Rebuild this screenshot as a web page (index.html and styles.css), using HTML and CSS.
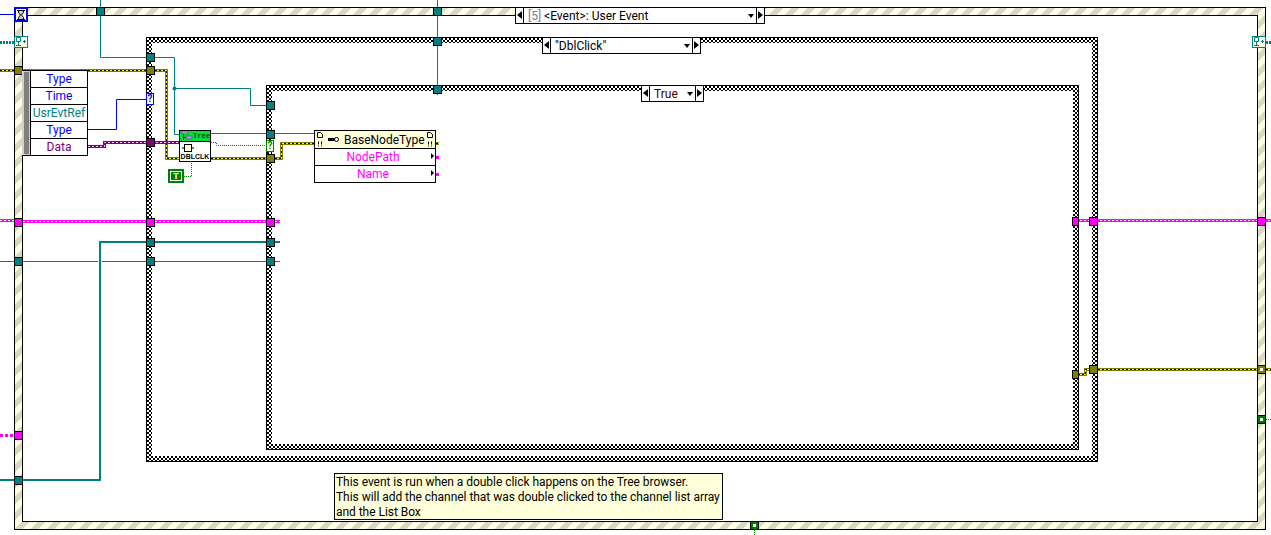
FILE: index.html
```html
<!DOCTYPE html>
<html lang="en">
<head>
<meta charset="utf-8">
<title>Block diagram</title>
<link rel="stylesheet" href="styles.css">
</head>
<body>
<main class="diagram">
  <section class="frame event-frame"><div class="frame-inner"></div></section>
  <section class="frame stack-frame"><div class="frame-inner"></div></section>
  <section class="frame case-frame"><div class="frame-inner"></div></section>

  <svg class="wires" width="1271" height="535" viewBox="0 0 1271 535" xmlns="http://www.w3.org/2000/svg">
    <defs>
      <path id="y1" d="M0 70.500H146"/>
      <path id="y2" d="M155 70.500H166.500V158.500H267"/>
      <path id="y3" d="M275 158.500H281.500V143.500H314"/>
      <path id="y4" d="M436 143.500H439"/>
      <path id="y5" d="M1078 374.500H1085.500V369.500H1090"/>
      <path id="y6" d="M1098 369.500H1271"/>
      <path id="p1" d="M0 220.500H14"/>
      <path id="p2" d="M23 221.500H280"/>
      <path id="p3" d="M1072 220.500H1271"/>
      <path id="d1" d="M88 146.500H104.500V142.500H180"/>
    </defs>
    <!-- plain wires -->
    <g class="w-blue">
      <path d="M0 14.500H14"/>
      <path d="M88 129.500H116.500V99.500H146"/>
    </g>
    <g class="w-teal">
      <path d="M100.500 0V57.500H146"/>
      <path d="M155 57.500H174.500V134.500H180"/>
      <path d="M174.500 88.500H250.500V105.500H267"/>
      <path d="M210 133.500H314"/>
      <path d="M0 261.500H98M102 261.500H280"/>
      <path d="M437.500 0V95"/>
    </g>
    <circle class="junction" cx="174.500" cy="88.500" r="2"/>
    <path class="w-teal-thick" d="M0 480H100V242H280"/>
    <g class="w-teal-double">
      <path d="M0 42.500H14"/>
      <path d="M1266 42.500H1271"/>
    </g>
    <g class="w-dots">
      <path d="M211 142.500H216.500V145.500H266"/>
      <path d="M184 176.500H191.500V163"/>
      <path d="M1266 419.500H1271"/>
      <path d="M754.500 530V535"/>
    </g>

    <!-- cluster wires -->
    <g class="c-yellow">
      <use href="#y1"/><use href="#y2"/><use href="#y3"/><use href="#y4"/><use href="#y5"/><use href="#y6"/>
    </g>
    <g class="c-yellow-core">
      <use href="#y1"/><use href="#y2"/><use href="#y3"/><use href="#y4"/><use href="#y5"/><use href="#y6"/>
    </g>
    <g class="c-yellow-dash">
      <use href="#y1"/><use href="#y2"/><use href="#y3"/><use href="#y4"/><use href="#y5"/><use href="#y6"/>
    </g>
    <g class="c-pink">
      <use href="#p1"/><use href="#p2"/><use href="#p3"/>
      <path d="M436 157.500H439"/>
      <path d="M436 174.500H439"/>
    </g>
    <g class="c-pink-dash">
      <use href="#p1"/><use href="#p2"/><use href="#p3"/>
    </g>
    <path class="c-pink-thin" d="M0 435.500H14"/>
    <g class="c-purple"><use href="#d1"/></g>
    <g class="c-purple-dash"><use href="#d1"/></g>

    <!-- tunnels -->
    <g class="t-teal">
      <rect x="96.500" y="7.500" width="8" height="8"/>
      <rect x="433.500" y="7.500" width="8" height="8"/>
      <rect x="433.500" y="37.500" width="8" height="8"/>
      <rect x="433.500" y="85.500" width="8" height="8"/>
      <rect x="146.500" y="53.500" width="8" height="8"/>
      <rect x="266.500" y="101.500" width="8" height="8"/>
      <rect x="266.500" y="130.500" width="8" height="8"/>
      <rect x="14.500" y="257.500" width="8" height="8"/>
      <rect x="146.500" y="257.500" width="8" height="8"/>
      <rect x="266.500" y="257.500" width="8" height="8"/>
      <rect x="146.500" y="238.500" width="8" height="8"/>
      <rect x="266.500" y="238.500" width="8" height="8"/>
      <rect x="14.500" y="476.500" width="8" height="8"/>
    </g>
    <g class="t-olive">
      <rect x="14.500" y="66.500" width="8" height="8"/>
      <rect x="146.500" y="66.500" width="8" height="8"/>
      <rect x="266.500" y="154.500" width="8" height="8"/>
      <rect x="1072.500" y="370.500" width="6" height="8"/>
      <rect x="1089.500" y="365.500" width="8" height="8"/>
      <rect x="1257.500" y="365.500" width="8" height="8"/>
    </g>
    <g class="t-pink">
      <rect x="14.500" y="218.500" width="8" height="8"/>
      <rect x="146.500" y="218.500" width="8" height="8"/>
      <rect x="266.500" y="218.500" width="8" height="8"/>
      <rect x="1072.500" y="217.500" width="6" height="8"/>
      <rect x="1089.500" y="217.500" width="8" height="8"/>
      <rect x="1257.500" y="217.500" width="8" height="8"/>
      <rect x="14.500" y="431.500" width="8" height="8"/>
    </g>
    <rect class="t-purple" x="146.500" y="138.500" width="8" height="8"/>
    <g class="t-green">
      <rect x="1257.500" y="415.500" width="8" height="8"/>
      <rect x="750.500" y="521.500" width="8" height="8"/>
    </g>
    <g class="t-dot">
      <rect x="1260" y="368" width="3" height="3"/>
      <rect x="1260" y="418" width="3" height="3"/>
      <rect x="753" y="524" width="3" height="3"/>
    </g>
  </svg>

  <!-- event structure terminals -->
  <div class="hourglass" aria-label="Timeout">
    <svg width="10" height="10" viewBox="0 0 10 10" xmlns="http://www.w3.org/2000/svg">
      <path class="glass-fill" d="M2 .5H8V2L5.500 5L8 8V9.500H2V8L4.500 5L2 2Z"/>
      <path class="glass-line" d="M1 .5H9M1 9.500H9M2.500 1V2.500L4.500 5L2.500 7.500V9M7.500 1V2.500L5.500 5L7.500 7.500V9"/>
    </svg>
  </div>
  <div class="reg-node reg-left">
    <svg width="12" height="10" viewBox="0 0 12 10" xmlns="http://www.w3.org/2000/svg">
      <path class="reg-line" d="M1.500 .5H5.500V4.500H1.500ZM3.500 4.500V8.500M1 8.500H6M8 4.500H11M9.500 3V6"/>
    </svg>
  </div>
  <div class="reg-node reg-right">
    <svg width="12" height="10" viewBox="0 0 12 10" xmlns="http://www.w3.org/2000/svg">
      <path class="reg-line" d="M1.500 .5H5.500V4.500H1.500ZM3.500 4.500V8.500M1 8.500H6M8 4.500H11M9.500 3V6"/>
    </svg>
  </div>

  <!-- question tunnels -->
  <div class="qbox qbox-blue">?</div>
  <div class="qbox qbox-green">?</div>

  <!-- case selectors -->
  <div class="selector sel-event">
    <span class="sel-arrow sel-prev"></span>
    <span class="sel-label"><span class="sel-index">[5]</span> &lt;Event&gt;: User Event</span>
    <span class="sel-drop"></span>
    <span class="sel-arrow sel-next"></span>
  </div>
  <div class="selector sel-stack">
    <span class="sel-arrow sel-prev"></span>
    <span class="sel-label">"DblClick"</span>
    <span class="sel-drop"></span>
    <span class="sel-arrow sel-next"></span>
  </div>
  <div class="selector sel-case">
    <span class="sel-arrow sel-prev"></span>
    <span class="sel-label">True</span>
    <span class="sel-drop"></span>
    <span class="sel-arrow sel-next"></span>
  </div>

  <!-- unbundle -->
  <div class="unbundle">
    <div class="handle"><span class="handle-bar"></span></div>
    <ul class="rows">
      <li class="row c-blue">Type</li>
      <li class="row c-blue">Time</li>
      <li class="row c-tealtext">UsrEvtRef</li>
      <li class="row c-blue">Type</li>
      <li class="row c-purpletext">Data</li>
    </ul>
  </div>

  <!-- tree node -->
  <div class="tree-node">
    <div class="tree-head">
      <svg class="tree-icon" width="13" height="10" viewBox="0 0 13 10" xmlns="http://www.w3.org/2000/svg">
        <path class="tree-branch" d="M3.500 3V9M3.500 6.500H6"/>
        <rect class="tree-item" x="2" y="0" width="6" height="3"/>
        <rect class="tree-item" x="6" y="5" width="6" height="3"/>
      </svg>
      <span class="tree-title">Tree</span>
    </div>
    <div class="tree-mid">
      <svg width="14" height="8" viewBox="0 0 14 8" xmlns="http://www.w3.org/2000/svg">
        <path class="tree-stub" d="M1 4H4M11 4H13"/>
        <rect class="tree-box" x="3.500" y=".5" width="7" height="7"/>
      </svg>
    </div>
    <div class="tree-foot">DBLCLK</div>
  </div>

  <!-- true constant -->
  <div class="bool-const"><span class="bool-t">T</span></div>

  <!-- bundle by name -->
  <div class="bundle">
    <div class="bundle-head">
      <svg class="doc" width="6" height="15" viewBox="0 0 6 15" xmlns="http://www.w3.org/2000/svg">
        <path class="doc-line" d="M.5 .5H3.500L5.500 2.500V5.500H.5ZM1.500 9.500V12.500M1.500 13.500V14.500M4.500 9.500V12.500M4.500 13.500V14.500"/>
      </svg>
      <svg class="key" width="11" height="7" viewBox="0 0 11 7" xmlns="http://www.w3.org/2000/svg">
        <path class="key-bar" d="M0 2H7V5H0Z"/>
        <circle class="key-ring" cx="8.500" cy="3.500" r="2"/>
      </svg>
      <span class="bundle-title">BaseNodeType</span>
      <svg class="doc" width="6" height="15" viewBox="0 0 6 15" xmlns="http://www.w3.org/2000/svg">
        <path class="doc-line" d="M.5 .5H3.500L5.500 2.500V5.500H.5ZM1.500 9.500V12.500M1.500 13.500V14.500M4.500 9.500V12.500M4.500 13.500V14.500"/>
      </svg>
    </div>
    <div class="bundle-row">NodePath<span class="row-arrow"></span></div>
    <div class="bundle-row">Name<span class="row-arrow"></span></div>
  </div>

  <!-- comment -->
  <p class="comment">This event is run when a double click happens on the Tree browser.<br>This will add the channel that was double clicked to the channel list array<br>and the List Box</p>
</main>
</body>
</html>
```
FILE: styles.css
```css
* { box-sizing: border-box; }
html, body { margin: 0; padding: 0; background: #fff; }
.diagram {
  position: relative;
  width: 1271px;
  height: 535px;
  overflow: hidden;
  background: #fff;
  font-family: Roboto, "Noto Sans", sans-serif;
  font-size: 12px;
  color: #000;
}

/* structure frames */
.frame { position: absolute; border: 1px solid #000; }
.frame-inner { width: 100%; height: 100%; background: #fff; }

.event-frame {
  left: 14px; top: 7px; width: 1252px; height: 523px;
  padding: 7px;
  background: repeating-linear-gradient(135deg, #ffffe6 0 5.66px, #d9d9c3 5.66px 11.32px);
}
.event-frame .frame-inner { border: 1px solid #000; }

.stack-frame {
  left: 146px; top: 37px; width: 952px; height: 425px;
  padding: 5px;
  background: conic-gradient(#000 25%, #fff 0 50%, #000 0 75%, #fff 0) 0 0 / 4px 4px;
}
.case-frame {
  left: 266px; top: 85px; width: 813px; height: 365px;
  padding: 5px;
  background: conic-gradient(#000 25%, #fff 0 50%, #000 0 75%, #fff 0) 0 0 / 4px 4px;
}

/* wires */
.wires { position: absolute; left: 0; top: 0; }
.wires path, .wires use { fill: none; }
.w-blue { stroke: #0000ff; stroke-width: 1; }
.w-teal { stroke: #008080; stroke-width: 1; }
.junction { fill: #008080; }
.w-teal-thick { stroke: #008080; stroke-width: 2; }
.w-teal-double { stroke: #008080; stroke-width: 3; stroke-dasharray: 2 1; }
.w-dots { stroke: #008000; stroke-width: 1; stroke-dasharray: 1 1; }
.c-yellow { stroke: #808000; stroke-width: 3; }
.c-yellow-core { stroke: #ffff00; stroke-width: 1; }
.c-yellow-dash { stroke: #000; stroke-width: 1; stroke-dasharray: 2 2; }
.c-pink { stroke: #ff00ff; stroke-width: 3; }
.c-pink-dash { stroke: #fff; stroke-width: 1; stroke-dasharray: 2 2; }
.c-pink-thin { stroke: #ff00ff; stroke-width: 3; stroke-dasharray: 3 2; }
.c-purple { stroke: #800080; stroke-width: 3; }
.c-purple-dash { stroke: #ffc8ff; stroke-width: 1; stroke-dasharray: 2 2; }

/* tunnels */
.wires rect { stroke: #000; stroke-width: 1; }
.t-teal rect { fill: #008080; }
.t-olive rect { fill: #808000; }
.t-pink rect { fill: #ff00ff; }
.t-purple { fill: #800080; }
.t-green rect { fill: #007c00; }
.wires .t-dot rect { fill: #fff; stroke: none; }

/* event terminals */
.hourglass {
  position: absolute; left: 14px; top: 7px; width: 14px; height: 15px;
  border: 2px solid #0000ff;
  background: #ffffe6;
  display: flex; align-items: center; justify-content: center;
}
.hourglass svg { flex: none; }
.glass-fill { fill: #c8c8b4; }
.glass-line { fill: none; stroke: #000; stroke-width: 1; }

.reg-node {
  position: absolute; top: 36px; width: 14px; height: 12px;
  border: 1px solid #008080;
  background: #ffffe6;
  display: flex; align-items: center; justify-content: center;
}
.reg-left { left: 14px; }
.reg-right { left: 1252px; }
.reg-line { fill: none; stroke: #008080; stroke-width: 1; }

/* question tunnels */
.qbox {
  position: absolute; width: 8px; height: 12px;
  display: flex; align-items: center; justify-content: center;
  background: #ffffe6;
  font-size: 10px; font-weight: 700; line-height: 1;
}
.qbox-blue { left: 146px; top: 93px; border: 1px solid #0000ff; color: #0000ff; }
.qbox-green { left: 266px; top: 140px; border: 1px solid #008000; color: #008000; }

/* selectors */
.selector {
  position: absolute;
  display: flex; align-items: center;
  background: #fff;
  border: 1px solid #000;
  height: 17px;
  font-size: 12px; line-height: 15px;
}
.sel-event { left: 515px; top: 7px; width: 250px; }
.sel-stack { left: 542px; top: 37px; width: 159px; }
.sel-case { left: 641px; top: 85px; width: 63px; color: #400000; }
.sel-arrow {
  flex: none; width: 8px; height: 15px;
  position: relative;
}
.sel-prev { border-right: 1px solid #000; }
.sel-next { border-left: 1px solid #000; }
.sel-prev::after, .sel-next::after {
  content: ""; position: absolute; top: 3px;
  border-top: 4px solid transparent; border-bottom: 4px solid transparent;
}
.sel-prev::after { left: 1px; border-right: 5px solid #000; }
.sel-next::after { left: 1px; border-left: 5px solid #000; }
.sel-label { flex: 1; padding: 1px 0 0 4px; height: 15px; white-space: nowrap; overflow: hidden; }
.sel-index { color: #7a7a9a; }
.sel-drop {
  flex: none; width: 0; height: 0; margin-right: 2px;
  border-left: 3.5px solid transparent; border-right: 3.5px solid transparent;
  border-top: 4px solid #000;
}

/* unbundle */
.unbundle {
  position: absolute; left: 22px; top: 70px; width: 66px; height: 86px;
  display: flex;
  background: #fff;
  border: 1px solid #000;
  border-left: none;
}
.handle {
  flex: none; width: 9px; background: #d4d0c8;
  display: flex; justify-content: center; align-items: stretch;
  border-right: 1px solid #000;
}
.handle-bar { display: block; flex: none; width: 5px; background: #7f7f7f; margin: 1px 0; }
.rows { flex: 1; min-width: 0; margin: 0; padding: 0; list-style: none; display: flex; flex-direction: column; }
.row {
  flex: 1; display: flex; align-items: center; justify-content: center;
  font-size: 12px; line-height: 1;
  padding-bottom: 1px;
  border-bottom: 1px solid #000;
}
.row:last-child { border-bottom: none; }
.c-blue { color: #0000ff; }
.c-tealtext { color: #008080; }
.c-purpletext { color: #800080; }

/* tree node */
.tree-node {
  position: absolute; left: 179px; top: 130px; width: 32px; height: 32px;
  border: 1px solid #000;
  background: #fff;
  display: flex; flex-direction: column;
}
.tree-head {
  height: 11px; background: #00e040;
  border-bottom: 1px solid #000;
  display: flex; align-items: center;
  flex: none;
}
.tree-icon { flex: none; }
.tree-title { font-family: "Liberation Mono", monospace; font-size: 7px; font-weight: 700; line-height: 1; color: #004000; letter-spacing: .1px; }
.tree-branch { fill: none; stroke: #004000; stroke-width: 1; }
.tree-item { fill: #a0a0d0; stroke: #404040; stroke-width: .5; }
.tree-mid { flex: 1; display: flex; align-items: center; padding-left: 1px; }
.tree-stub { fill: none; stroke: #000; stroke-width: 1; }
.tree-box { fill: #ffffc8; stroke: #000; stroke-width: 1; }
.tree-foot { font-family: "Liberation Sans", sans-serif; font-size: 7px; line-height: 8px; text-align: center; flex: none; font-weight: 700; }

/* boolean constant */
.bool-const {
  position: absolute; left: 168px; top: 169px; width: 16px; height: 14px;
  border: 2px solid #008000; background: #008000;
  display: flex; align-items: center; justify-content: center;
}
.bool-t {
  width: 10px; height: 8px;
  background: #008000; color: #fff;
  outline: 1px solid #fff;
  font-family: "Liberation Sans", sans-serif; font-size: 9px; font-weight: 700; line-height: 8px; text-align: center;
}

/* bundle by name */
.bundle {
  position: absolute; left: 314px; top: 130px; width: 122px; height: 53px;
  border: 1px solid #000;
  background: #fff;
  display: flex; flex-direction: column;
}
.bundle-head {
  flex: none; height: 18px; background: #ffffd9;
  border-bottom: 1px solid #000;
  display: flex; align-items: center;
  padding: 0 2px;
}
.doc { flex: none; }
.doc-line { fill: none; stroke: #000; stroke-width: 1; }
.key { flex: none; margin-left: 5px; }
.key-bar { fill: #000; }
.key-ring { fill: #fff; stroke: #000; stroke-width: 1; }
.bundle-title { flex: 1; margin-left: 5px; font-size: 12px; line-height: 1; white-space: nowrap; color: #000; }
.bundle-row {
  flex: 1; position: relative;
  display: flex; align-items: center; justify-content: center;
  color: #ff00ff; font-size: 12px; line-height: 1;
  padding: 0 4px 1px 0;
  border-bottom: 1px solid #000;
}
.bundle-row:last-child { border-bottom: none; }
.row-arrow {
  position: absolute; right: 1px; top: 4px;
  border-top: 3px solid transparent; border-bottom: 3px solid transparent;
  border-left: 3px solid #000;
}

/* comment */
.comment {
  position: absolute; left: 334px; top: 473px; width: 389px; height: 47px;
  margin: 0; padding: 1px 1px 0;
  background: #ffffd9;
  border: 1px solid #000;
  font-size: 12px; line-height: 15px;
  letter-spacing: -.04px;
  white-space: nowrap;
  color: #000;
}
```
